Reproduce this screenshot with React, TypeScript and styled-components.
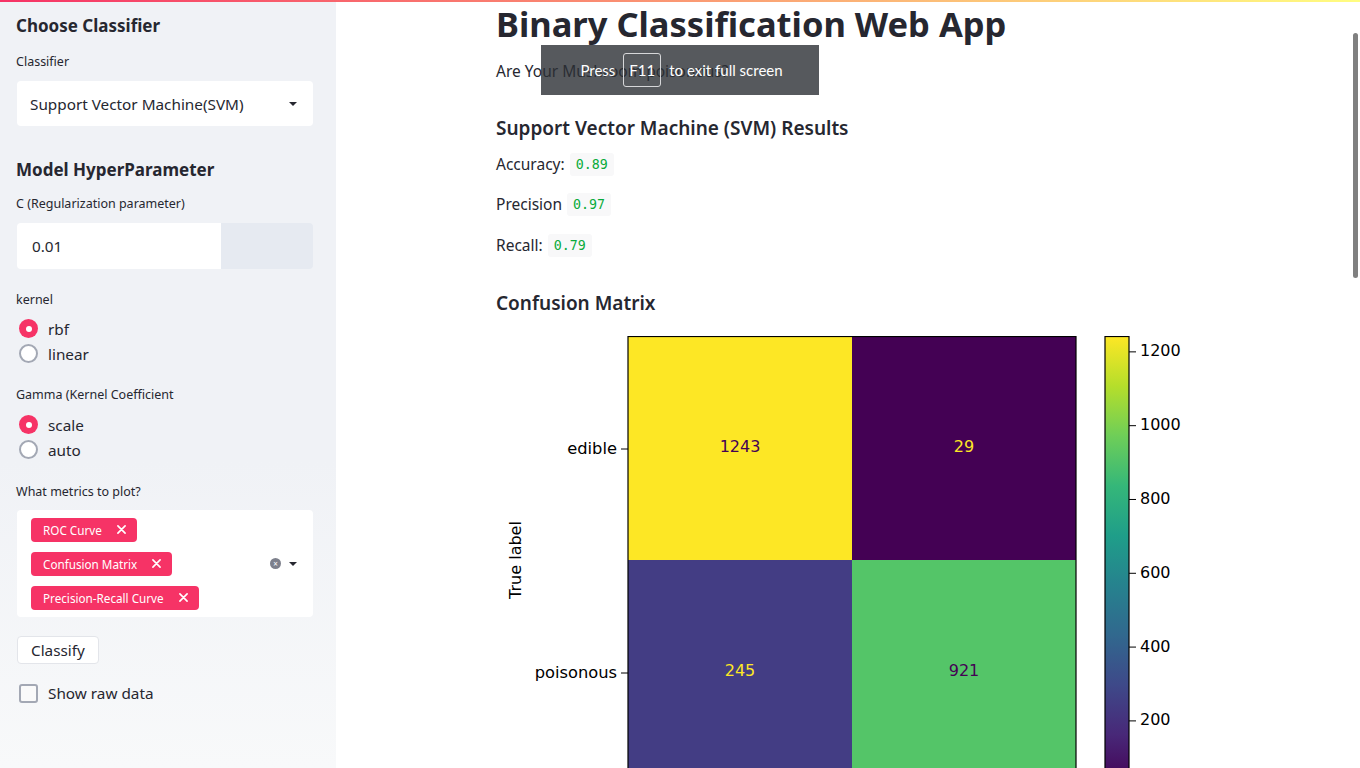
import React from "react";
import styled, { createGlobalStyle } from "styled-components";

const GlobalStyle = createGlobalStyle`
  html, body {
    margin: 0;
    padding: 0;
    height: 100%;
    overflow: hidden;
    background: #ffffff;
  }
  body {
    font-family: "Noto Sans", "Open Sans", sans-serif;
    color: #262730;
  }
  * {
    box-sizing: border-box;
  }
`;

const PRIMARY = "#f63366";

const Page = styled.div`
  position: relative;
  display: flex;
  width: 100vw;
  height: 100vh;
`;

const Decoration = styled.div`
  position: absolute;
  top: 0;
  left: 0;
  right: 0;
  height: 2px;
  background: linear-gradient(90deg, #f63366, #fffd80);
  z-index: 5;
`;

const Sidebar = styled.aside`
  width: 336px;
  flex-shrink: 0;
  height: 100%;
  background: linear-gradient(180deg, #f0f2f6 0%, #f0f2f6 60%, #f8f9fa 100%);
  padding: 14px 23px 0 17px;
  display: flex;
  flex-direction: column;
`;

const SideTitle = styled.h2<{ $top?: number }>`
  margin: ${(p) => p.$top ?? 0}px 0 0 -1px;
  font-size: 17px;
  line-height: 24px;
  font-weight: 700;
`;

const Label = styled.div<{ $top: number }>`
  margin-top: ${(p) => p.$top}px;
  font-size: 12.5px;
  line-height: 16px;
  margin-left: -1px;
`;

const SelectBox = styled.div`
  margin-top: 11px;
  height: 45px;
  background: #fff;
  border-radius: 4px;
  display: flex;
  align-items: center;
  justify-content: space-between;
  padding: 0 16px 0 13px;
  font-size: 15.3px;
`;

const Caret = styled.span`
  width: 0;
  height: 0;
  border-left: 4px solid transparent;
  border-right: 4px solid transparent;
  border-top: 4px solid #262730;
`;

const NumberRow = styled.div`
  margin-top: 11px;
  height: 46px;
  display: flex;
`;

const NumberField = styled.div`
  flex: 1;
  background: #fff;
  border-radius: 4px 0 0 4px;
  display: flex;
  align-items: center;
  padding-left: 15px;
  font-size: 15.3px;
`;

const NumberSteps = styled.div`
  width: 92px;
  background: #e6eaf1;
  border-radius: 0 4px 4px 0;
`;

const RadioGroup = styled.div<{ $top: number }>`
  margin-top: ${(p) => p.$top}px;
  display: flex;
  flex-direction: column;
`;

const RadioRow = styled.label`
  height: 25px;
  display: flex;
  align-items: center;
  gap: 10px;
  font-size: 15.3px;
  padding-left: 2px;
`;

const RadioDot = styled.span<{ $checked?: boolean }>`
  width: 19px;
  height: 19px;
  border-radius: 50%;
  background: ${(p) => (p.$checked ? PRIMARY : "#fff")};
  border: ${(p) => (p.$checked ? "none" : "2px solid #a3a8b4")};
  display: flex;
  align-items: center;
  justify-content: center;
  &::after {
    content: "";
    display: ${(p) => (p.$checked ? "block" : "none")};
    width: 6px;
    height: 6px;
    border-radius: 50%;
    background: #fff;
  }
`;

const MultiBox = styled.div`
  margin-top: 10px;
  height: 107px;
  background: #fff;
  border-radius: 4px;
  display: flex;
  align-items: center;
  padding: 0 16px 0 14px;
`;

const TagList = styled.div`
  flex: 1;
  display: flex;
  flex-direction: column;
  align-items: flex-start;
  gap: 10px;
`;

const Tag = styled.span`
  height: 24px;
  background: ${PRIMARY};
  color: #fff;
  border-radius: 4px;
  font-size: 11.7px;
  display: inline-flex;
  align-items: center;
  gap: 15px;
  padding: 0 11px 0 12px;
`;

const ClearIcon = styled.span`
  width: 11px;
  height: 11px;
  border-radius: 50%;
  background: #7d808c;
  color: #fff;
  font-size: 8px;
  line-height: 11px;
  text-align: center;
  margin-right: 8px;
`;

const Button = styled.button`
  margin-top: 19px;
  align-self: flex-start;
  height: 28px;
  padding: 0 13px;
  background: #fff;
  border: 1px solid #e3e5ea;
  border-radius: 4px;
  font-family: inherit;
  font-size: 15.3px;
  color: #262730;
`;

const CheckRow = styled.label`
  margin-top: 17px;
  height: 24px;
  display: flex;
  align-items: center;
  gap: 10px;
  font-size: 15.3px;
  padding-left: 2px;
`;

const CheckBox = styled.span`
  width: 19px;
  height: 19px;
  border: 2px solid #a3a8b4;
  border-radius: 3px;
  background: #fafafa;
`;

const Main = styled.main`
  flex: 1;
  display: flex;
  justify-content: center;
  height: 100%;
  overflow: hidden;
`;

const Content = styled.div`
  width: 704px;
  display: flex;
  flex-direction: column;
  padding-top: 2px;
`;

const Title = styled.h1`
  margin: 0;
  font-size: 34.5px;
  line-height: 44px;
  font-weight: 700;
`;

const Text = styled.p<{ $top: number }>`
  margin: ${(p) => p.$top}px 0 0;
  height: 24px;
  font-size: 15.5px;
  line-height: 24px;
  display: flex;
  align-items: center;
  gap: 5px;
`;

const SubHeader = styled.h3<{ $top: number }>`
  margin: ${(p) => p.$top}px 0 0;
  font-size: 19px;
  line-height: 26px;
  font-weight: 600;
`;

const Code = styled.code`
  font-family: "DejaVu Sans Mono", "Liberation Mono", monospace;
  font-size: 13.3px;
  line-height: 17px;
  color: #09ab3b;
  background: #f8f8f9;
  border-radius: 3px;
  padding: 3px 6px;
`;

const Figure = styled.svg`
  margin-top: 20px;
  display: block;
  flex-shrink: 0;
`;

const Scrollbar = styled.div`
  position: absolute;
  right: 2px;
  top: 33px;
  width: 5px;
  height: 245px;
  border-radius: 3px;
  background: #808080;
`;

const FullscreenHint = styled.div`
  position: absolute;
  left: 541px;
  top: 45px;
  width: 278px;
  height: 50px;
  background: rgba(44, 47, 52, 0.8);
  color: #fff;
  font-family: Lato, "Noto Sans", sans-serif;
  font-size: 15px;
  display: flex;
  align-items: center;
  justify-content: center;
  gap: 8px;
  padding-left: 3px;
  z-index: 4;
`;

const Key = styled.span`
  border: 1px solid #d6d7d9;
  border-radius: 3px;
  height: 34px;
  padding: 0 5px;
  display: flex;
  align-items: center;
`;

const XMark = () => (
  <svg width="9" height="9" viewBox="0 0 10 10">
    <path d="M1 1L9 9M9 1L1 9" stroke="#fff" strokeWidth="1.8" strokeLinecap="round" />
  </svg>
);

const viridis = [
  "#440154",
  "#482878",
  "#3e4989",
  "#31688e",
  "#26828e",
  "#1f9e89",
  "#35b779",
  "#6ece58",
  "#b5de2b",
  "#fde725",
];

const cells = [
  { x: 0, y: 0, fill: "#fde725", value: "1243", text: "#440154" },
  { x: 1, y: 0, fill: "#440154", value: "29", text: "#fde725" },
  { x: 0, y: 1, fill: "#433d84", value: "245", text: "#fde725" },
  { x: 1, y: 1, fill: "#54c568", value: "921", text: "#440154" },
];

const barTicks = [1200, 1000, 800, 600, 400, 200];

const ConfusionPlot = () => {
  const left = 132;
  const top = 0;
  const size = 224;
  const barX = 609;
  const barH = size * 2;
  const valueY = (v: number) => top + ((1243 - v) / (1243 - 29)) * barH;
  const font = '"DejaVu Sans", sans-serif';
  return (
    <Figure width="704" height="460" viewBox="0 0 704 460">
      <defs>
        <linearGradient id="viridis" x1="0" y1="1" x2="0" y2="0">
          {viridis.map((c, i) => (
            <stop key={c} offset={`${(i / (viridis.length - 1)) * 100}%`} stopColor={c} />
          ))}
        </linearGradient>
      </defs>
      {cells.map((c) => (
        <g key={c.value}>
          <rect x={left + c.x * size} y={top + c.y * size} width={size} height={size} fill={c.fill} />
          <text
            x={left + c.x * size + size / 2}
            y={top + c.y * size + size / 2 - 1}
            fill={c.text}
            fontFamily={font}
            fontSize="16"
            textAnchor="middle"
            dominantBaseline="middle"
          >
            {c.value}
          </text>
        </g>
      ))}
      <rect x={left} y={top + 0.5} width={size * 2} height={size * 2} fill="none" stroke="#000" strokeWidth="1.2" />
      {["edible", "poisonous"].map((l, i) => (
        <g key={l}>
          <line x1={left - 7} x2={left} y1={top + size / 2 + i * size + 1} y2={top + size / 2 + i * size + 1} stroke="#000" strokeWidth="1" />
          <text
            x={left - 11}
            y={top + size / 2 + i * size + 1}
            fontFamily={font}
            fontSize="16.3"
            textAnchor="end"
            dominantBaseline="middle"
            fill="#000"
          >
            {l}
          </text>
        </g>
      ))}
      <text
        transform={`translate(25 ${top + 224}) rotate(-90)`}
        fontFamily={font}
        fontSize="16"
        textAnchor="middle"
        fill="#000"
      >
        True label
      </text>
      <rect x={barX} y={top + 0.5} width={24} height={barH} fill="url(#viridis)" stroke="#000" strokeWidth="1.2" />
      {barTicks.map((t) => (
        <g key={t}>
          <line x1={barX + 24} x2={barX + 31} y1={valueY(t)} y2={valueY(t)} stroke="#000" strokeWidth="1" />
          <text x={barX + 35} y={valueY(t)} fontFamily={font} fontSize="16" dominantBaseline="middle" fill="#000">
            {t}
          </text>
        </g>
      ))}
    </Figure>
  );
};

const App = () => {
  return (
    <>
      <GlobalStyle />
      <Page>
        <Decoration />
        <Sidebar>
          <SideTitle>Choose Classifier</SideTitle>
          <Label $top={16}>Classifier</Label>
          <SelectBox>
            <span>Support Vector Machine(SVM)</span>
            <Caret />
          </SelectBox>

          <SideTitle $top={32}>Model HyperParameter</SideTitle>
          <Label $top={14}>C (Regularization parameter)</Label>
          <NumberRow>
            <NumberField>0.01</NumberField>
            <NumberSteps />
          </NumberRow>

          <Label $top={23}>kernel</Label>
          <RadioGroup $top={8}>
            <RadioRow>
              <RadioDot $checked />
              rbf
            </RadioRow>
            <RadioRow>
              <RadioDot />
              linear
            </RadioRow>
          </RadioGroup>

          <Label $top={21}>Gamma (Kernel Coefficient</Label>
          <RadioGroup $top={9}>
            <RadioRow>
              <RadioDot $checked />
              scale
            </RadioRow>
            <RadioRow>
              <RadioDot />
              auto
            </RadioRow>
          </RadioGroup>

          <Label $top={22}>What metrics to plot?</Label>
          <MultiBox>
            <TagList>
              <Tag>
                ROC Curve
                <XMark />
              </Tag>
              <Tag>
                Confusion Matrix
                <XMark />
              </Tag>
              <Tag>
                Precision-Recall Curve
                <XMark />
              </Tag>
            </TagList>
            <ClearIcon>×</ClearIcon>
            <Caret />
          </MultiBox>

          <Button>Classify</Button>
          <CheckRow>
            <CheckBox />
            Show raw data
          </CheckRow>
        </Sidebar>

        <Main>
          <Content>
            <Title>Binary Classification Web App</Title>
            <Text $top={13}>Are Your Mushroom poisonous?</Text>
            <SubHeader $top={32}>Support Vector Machine (SVM) Results</SubHeader>
            <Text $top={11}>
              Accuracy: <Code>0.89</Code>
            </Text>
            <Text $top={16}>
              Precision <Code>0.97</Code>
            </Text>
            <Text $top={17}>
              Recall: <Code>0.79</Code>
            </Text>
            <SubHeader $top={33}>Confusion Matrix</SubHeader>
            <ConfusionPlot />
          </Content>
        </Main>

        <Scrollbar />
        <FullscreenHint>
          Press <Key>F11</Key> to exit full screen
        </FullscreenHint>
      </Page>
    </>
  );
};

export default App;
